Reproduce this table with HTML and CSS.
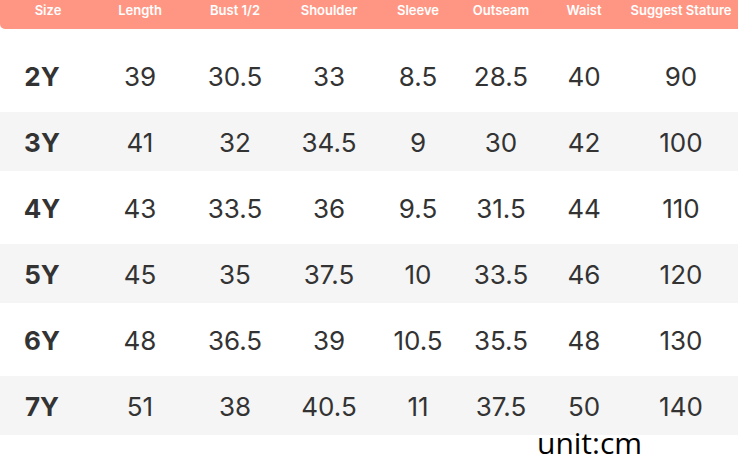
FILE: index.html
```html
<!DOCTYPE html>
<html>
<head>
<meta charset="utf-8">
<link rel="stylesheet" href="styles.css">
</head>
<body>
<div class="chart">
  <div class="head">
    <div class="c first">Size</div>
    <div class="c">Length</div>
    <div class="c">Bust 1/2</div>
    <div class="c">Shoulder</div>
    <div class="c">Sleeve</div>
    <div class="c">Outseam</div>
    <div class="c">Waist</div>
    <div class="c">Suggest Stature</div>
  </div>
  <div class="rows">
    <div class="row"><div class="c size">2Y</div><div class="c">39</div><div class="c">30.5</div><div class="c">33</div><div class="c">8.5</div><div class="c">28.5</div><div class="c">40</div><div class="c">90</div></div>
    <div class="row alt"><div class="c size">3Y</div><div class="c">41</div><div class="c">32</div><div class="c">34.5</div><div class="c">9</div><div class="c">30</div><div class="c">42</div><div class="c">100</div></div>
    <div class="row"><div class="c size">4Y</div><div class="c">43</div><div class="c">33.5</div><div class="c">36</div><div class="c">9.5</div><div class="c">31.5</div><div class="c">44</div><div class="c">110</div></div>
    <div class="row alt"><div class="c size">5Y</div><div class="c">45</div><div class="c">35</div><div class="c">37.5</div><div class="c">10</div><div class="c">33.5</div><div class="c">46</div><div class="c">120</div></div>
    <div class="row"><div class="c size">6Y</div><div class="c">48</div><div class="c">36.5</div><div class="c">39</div><div class="c">10.5</div><div class="c">35.5</div><div class="c">48</div><div class="c">130</div></div>
    <div class="row alt"><div class="c size">7Y</div><div class="c">51</div><div class="c">38</div><div class="c">40.5</div><div class="c">11</div><div class="c">37.5</div><div class="c">50</div><div class="c">140</div></div>
  </div>
  <div class="unit-wrap"><span class="unit">unit:cm</span></div>
</div>
</body>
</html>
```

FILE: styles.css
```css
html, body {
  margin: 0;
  padding: 0;
  background: #ffffff;
}
.chart {
  width: 738px;
  font-family: Inter, "Liberation Sans", sans-serif;
}
.head, .row {
  display: grid;
  grid-template-columns: 90px 100px 90px 98px 80px 86px 80px 114px;
}
.head {
  height: 29px;
  background: #ff9683;
  border-bottom-left-radius: 5px;
  color: #ffffff;
  font-size: 13px;
  font-weight: 600;
  line-height: 16px;
  box-sizing: border-box;
  padding-top: 2px;
}
.head .c {
  text-align: center;
  white-space: nowrap;
}
.head .first {
  padding-left: 6px;
}
.rows {
  padding-top: 10px;
}
.row {
  height: 73px;
  align-items: center;
  color: #333333;
  font-size: 26px;
  font-weight: 400;
}
.row.alt {
  height: 59px;
  background: #f5f5f5;
}
.row .c {
  text-align: center;
  padding-top: 2px;
}
.row .size {
  font-weight: 700;
  padding-right: 6px;
}
.unit-wrap {
  display: flex;
  padding-left: 537px;
  margin-top: -4px;
}
.unit {
  font-family: "Open Sans", "Noto Sans", sans-serif;
  font-size: 30px;
  line-height: 24px;
  color: #000000;
}
```
